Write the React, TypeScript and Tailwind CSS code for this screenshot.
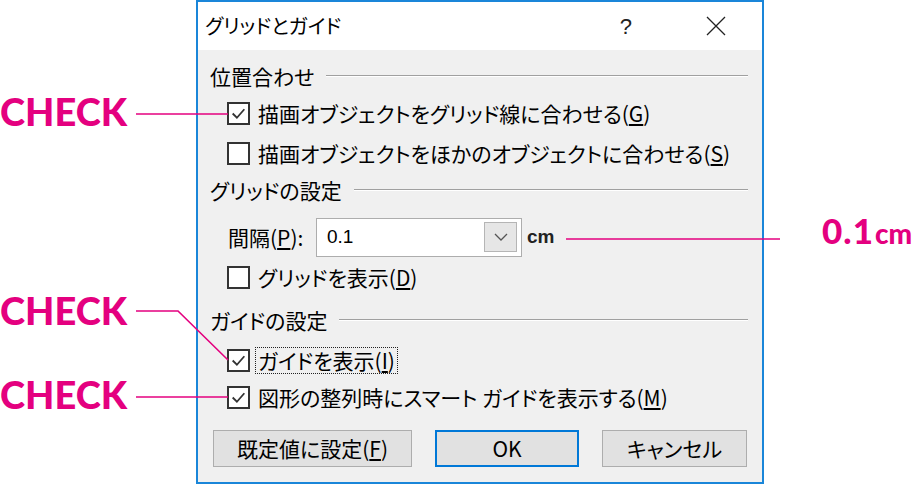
import React from "react";

const jp = "font-['Noto_Sans_CJK_JP',sans-serif] [font-feature-settings:'palt']";

function Check({ checked }: { checked?: boolean }) {
  return (
    <div className="w-[23px] h-[23px] border-2 border-[#333] bg-white flex items-center justify-center shrink-0">
      {checked && (
        <svg width="17" height="17" viewBox="0 0 16 16">
          <polyline points="2.5,8 6.5,12 13.5,4" fill="none" stroke="#333" strokeWidth="1.7" />
        </svg>
      )}
    </div>
  );
}

function Header({ label, className }: { label: string; className: string }) {
  return (
    <div className={`flex items-center h-[24px] pl-[12px] pr-[14px] gap-[12px] ${className}`}>
      <span className="text-[21px] leading-none text-black whitespace-nowrap">{label}</span>
      <div className="flex-1 flex flex-col">
        <div className="h-px bg-[#a0a0a0]" />
        <div className="h-px bg-white" />
      </div>
    </div>
  );
}

function CheckRow({
  checked,
  text,
  acc,
  focus,
  className,
}: {
  checked?: boolean;
  text: string;
  acc: string;
  focus?: boolean;
  className: string;
}) {
  return (
    <div className={`flex items-center h-[24px] pl-[29px] gap-[8px] ${className}`}>
      <Check checked={checked} />
      <span
        className={`text-[21px] leading-none text-black whitespace-nowrap ${
          focus ? "outline outline-1 outline-dotted outline-[#222] outline-offset-[2px]" : ""
        }`}
      >
        {text}(<span className="underline underline-offset-2">{acc}</span>)
      </span>
    </div>
  );
}

function Btn({ children, primary }: { children: React.ReactNode; primary?: boolean }) {
  return (
    <div
      className={`h-[37px] flex items-center justify-center bg-[#e1e1e1] text-[21px] text-black ${
        primary ? "border-2 border-[#0078d7]" : "border border-[#adadad]"
      }`}
    >
      {children}
    </div>
  );
}

export default function App() {
  return (
    <div className={`relative w-[924px] h-[484px] bg-white overflow-hidden ${jp}`}>
      <div className="ml-[196px] w-[568px] h-[484px] border-2 border-[#1a86d9] flex flex-col bg-[#f0f0f0]">
        {/* title bar */}
        <div className="h-[48px] bg-white flex items-center pl-[7px] shrink-0">
          <span className="text-[20px] text-black">グリッドとガイド</span>
          <span className="ml-auto mr-[74px] text-[22px] font-['Liberation_Sans',sans-serif] text-[#222]">?</span>
          <svg width="20" height="20" viewBox="0 0 20 20" className="mr-[36px]">
            <path d="M1 1 L19 19 M19 1 L1 19" stroke="#222" strokeWidth="1.3" />
          </svg>
        </div>

        <Header label="位置合わせ" className="mt-[14px]" />
        <CheckRow checked text="描画オブジェクトをグリッド線に合わせる" acc="G" className="mt-[13px]" />
        <CheckRow text="描画オブジェクトをほかのオブジェクトに合わせる" acc="S" className="mt-[16px]" />

        <Header label="グリッドの設定" className="mt-[13px]" />
        <div className="flex items-center h-[38px] mt-[16px] pl-[30px]">
          <span className="text-[21px] leading-none text-black w-[88px] whitespace-nowrap">
            間隔(<span className="underline underline-offset-2">P</span>):
          </span>
          <div className="w-[206px] h-[39px] border border-[#adadad] bg-white flex items-center pl-[10px] pr-[4px]">
            <span className="text-[19px] text-black font-['Liberation_Sans',sans-serif]">0.1</span>
            <div className="ml-auto w-[33px] h-[30px] border border-[#b5b5b5] bg-[#e6e6e6] flex items-center justify-center">
              <svg width="14" height="8" viewBox="0 0 14 8">
                <polyline points="1,1 7,7 13,1" fill="none" stroke="#555" strokeWidth="1.3" />
              </svg>
            </div>
          </div>
          <span className="ml-[5px] text-[19px] font-semibold text-[#222] font-['Liberation_Sans',sans-serif]">cm</span>
        </div>
        <CheckRow text="グリッドを表示" acc="D" className="mt-[9px]" />

        <Header label="ガイドの設定" className="mt-[19px]" />
        <CheckRow checked focus text="ガイドを表示" acc="I" className="mt-[16px]" />
        <CheckRow checked text="図形の整列時にスマート ガイドを表示する" acc="M" className="mt-[13px]" />

        <div className="grid grid-cols-[199px_144px_145px] gap-x-[23px] mt-[21px] pl-[15px]">
          <Btn>
            既定値に設定(<span className="underline underline-offset-2">F</span>)
          </Btn>
          <Btn primary>OK</Btn>
          <Btn>キャンセル</Btn>
        </div>
      </div>

      {/* callout labels */}
      <div className="absolute left-0 top-[92px] text-[38px] leading-none font-black text-[#e4007f] font-['Lato',sans-serif]">CHECK</div>
      <div className="absolute left-0 top-[291px] text-[38px] leading-none font-black text-[#e4007f] font-['Lato',sans-serif]">CHECK</div>
      <div className="absolute left-0 top-[375px] text-[38px] leading-none font-black text-[#e4007f] font-['Lato',sans-serif]">CHECK</div>
      <div className="absolute left-[822px] top-[213px] flex items-baseline font-black text-[#e4007f] font-['Lato',sans-serif] leading-none">
        <span className="text-[35px] tracking-[1px]">0.1</span>
        <span className="text-[28px] ml-[1px]">cm</span>
      </div>

      <svg className="absolute inset-0 pointer-events-none" width="924" height="484">
        <g stroke="#e4007f" strokeWidth="1.6" fill="none">
          <line x1="136" y1="114" x2="228" y2="114" />
          <polyline points="136,311 178,311 228,360" />
          <line x1="136" y1="397" x2="228" y2="397" />
          <line x1="566" y1="239" x2="780" y2="239" />
        </g>
      </svg>
    </div>
  );
}
